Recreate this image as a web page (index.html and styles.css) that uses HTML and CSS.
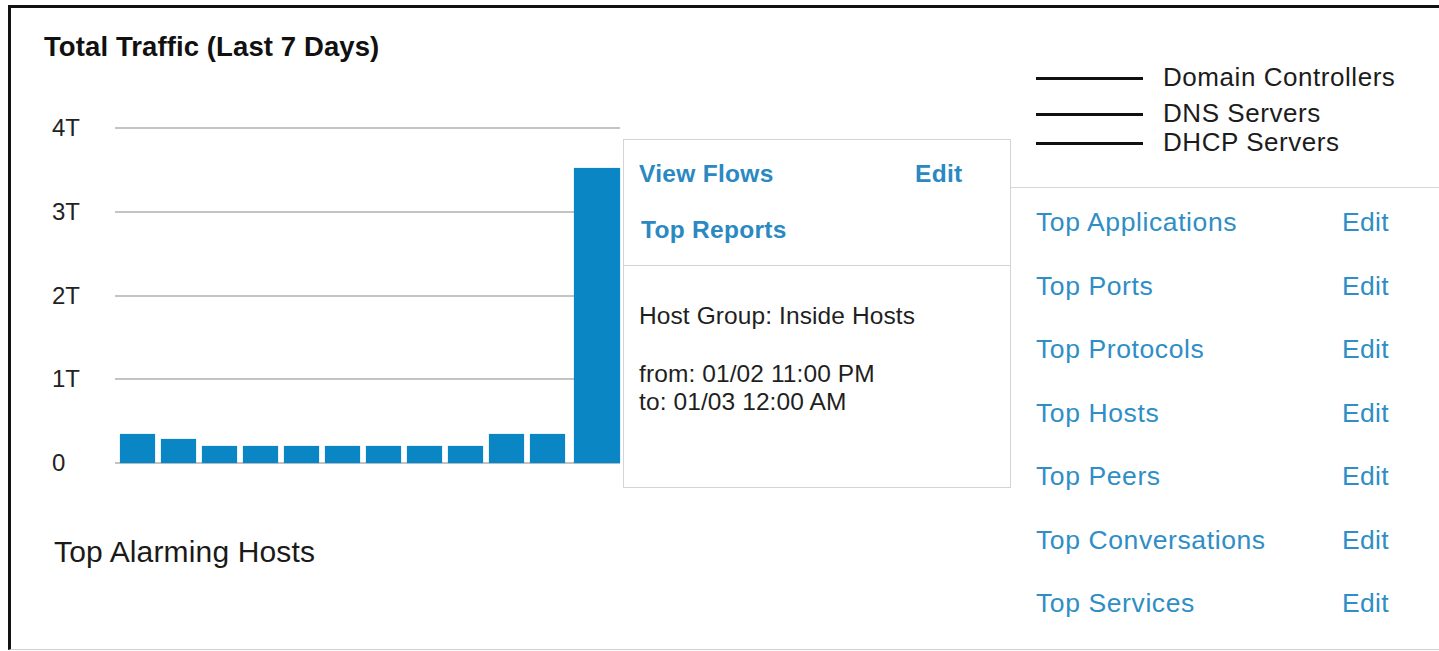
FILE: index.html
```html
<!DOCTYPE html>
<html lang="en">
<head>
<meta charset="utf-8">
<title>Total Traffic</title>
<link rel="stylesheet" href="styles.css">
</head>
<body>
<div class="frame">
  <section class="traffic">
    <h2 class="title">Total Traffic (Last 7 Days)</h2>

    <div class="chart">
      <div class="axis">
        <span>4T</span>
        <span>3T</span>
        <span>2T</span>
        <span>1T</span>
        <span>0</span>
      </div>
      <div class="plot">
        <div class="grid-lines">
          <div class="gl"></div>
          <div class="gl"></div>
          <div class="gl"></div>
          <div class="gl"></div>
          <div class="gl"></div>
        </div>
        <div class="bars">
          <div class="bar" style="height:29px"></div>
          <div class="bar" style="height:24px"></div>
          <div class="bar" style="height:17px"></div>
          <div class="bar" style="height:17px"></div>
          <div class="bar" style="height:17px"></div>
          <div class="bar" style="height:17px"></div>
          <div class="bar" style="height:17px"></div>
          <div class="bar" style="height:17px"></div>
          <div class="bar" style="height:17px"></div>
          <div class="bar" style="height:29px"></div>
          <div class="bar" style="height:29px"></div>
          <div class="bar bar-peak" style="height:295px"></div>
        </div>
      </div>
    </div>

    <h3 class="alarming">Top Alarming Hosts</h3>

    <div class="popover">
      <div class="pop-actions">
        <a class="pop-link">View Flows</a>
        <a class="pop-link">Edit</a>
        <a class="pop-link pop-reports">Top Reports</a>
      </div>
      <div class="pop-body">
        <p class="pop-group">Host Group: Inside Hosts</p>
        <p>from: 01/02 11:00 PM</p>
        <p>to: 01/03 12:00 AM</p>
      </div>
    </div>
  </section>

  <aside class="side">
    <ul class="legend">
      <li><span class="swatch"></span>Domain Controllers</li>
      <li class="legend-dns"><span class="swatch"></span>DNS Servers</li>
      <li class="legend-dhcp"><span class="swatch"></span>DHCP Servers</li>
    </ul>
    <ul class="reports">
      <li><a class="rep-name">Top Applications</a><a class="rep-edit">Edit</a></li>
      <li><a class="rep-name">Top Ports</a><a class="rep-edit">Edit</a></li>
      <li><a class="rep-name">Top Protocols</a><a class="rep-edit">Edit</a></li>
      <li><a class="rep-name">Top Hosts</a><a class="rep-edit">Edit</a></li>
      <li><a class="rep-name">Top Peers</a><a class="rep-edit">Edit</a></li>
      <li><a class="rep-name">Top Conversations</a><a class="rep-edit">Edit</a></li>
      <li><a class="rep-name">Top Services</a><a class="rep-edit">Edit</a></li>
    </ul>
  </aside>
</div>
</body>
</html>
```

FILE: styles.css
```css
* {
  box-sizing: border-box;
}

html,
body {
  margin: 0;
  padding: 0;
  background: #ffffff;
  overflow: hidden;
}

body {
  font-family: "Liberation Sans", Arial, Helvetica, sans-serif;
  color: #1c1c1c;
}

ul {
  list-style: none;
  margin: 0;
  padding: 0;
}

p,
h2,
h3 {
  margin: 0;
}

a {
  color: #2b8cc4;
  text-decoration: none;
  cursor: pointer;
}

/* outer panel */
.frame {
  display: flex;
  margin: 5px 0 0 8px;
  height: 645px;
  border-top: 3px solid #121212;
  border-left: 3px solid #121212;
  border-bottom: 1px solid #cfcfcf;
}

/* left: traffic chart */
.traffic {
  position: relative;
  width: 1000px;
  flex: none;
  padding: 22.5px 0 0 33px;
}

.title {
  font-size: 27.5px;
  line-height: 32px;
  font-weight: 700;
  letter-spacing: 0.1px;
  color: #111111;
}

.chart {
  display: grid;
  grid-template-columns: 63px 505px;
  height: 359px;
  margin: 53.5px 0 0 8px;
}

.axis {
  display: flex;
  flex-direction: column;
  justify-content: space-between;
  font-size: 24px;
  line-height: 24px;
  color: #222222;
}

.plot {
  display: grid;
}

.grid-lines,
.bars {
  grid-area: 1 / 1;
}

.grid-lines {
  display: flex;
  flex-direction: column;
  justify-content: space-between;
}

.gl {
  height: 2px;
  margin: 11px 0;
  background: #c4c4c4;
}

.bars {
  display: flex;
  align-items: flex-end;
  padding: 0 0 12px 5px;
}

.bar {
  width: 35px;
  margin-right: 6px;
  background: #0b86c5;
  box-shadow: 0 0 1px rgba(11, 134, 197, 0.6);
}

.bar-peak {
  width: 46px;
  margin: 0 0 0 3px;
}

.alarming {
  margin: 59.5px 0 0 10px;
  font-size: 30px;
  line-height: 34px;
  font-weight: 400;
  letter-spacing: 0.15px;
  color: #1a1a1a;
}

/* hover card over the peak bar */
.popover {
  position: absolute;
  left: 612px;
  top: 131px;
  width: 388px;
  height: 349px;
  background: #ffffff;
  border: 1px solid #d4d4d4;
}

.pop-actions {
  display: grid;
  grid-template-columns: 276px auto;
  row-gap: 28px;
  padding: 20px 0 21px 15px;
  border-bottom: 1px solid #d4d4d4;
}

.pop-link {
  font-size: 24.5px;
  line-height: 28px;
  font-weight: 700;
  letter-spacing: 0.3px;
  color: #2a89c2;
}

.pop-reports {
  grid-column: 1 / span 2;
  margin-left: 2px;
}

.pop-body {
  padding: 36px 0 0 15px;
  font-size: 24.5px;
  line-height: 28px;
  letter-spacing: 0.1px;
  color: #1f1f1f;
}

.pop-group {
  margin-bottom: 30px;
}

/* right: legend and report links */
.side {
  flex: 1;
  padding-top: 54px;
}

.legend {
  display: flex;
  flex-direction: column;
  padding-left: 25px;
  font-size: 26px;
  line-height: 30px;
  letter-spacing: 0.55px;
  color: #1c1c1c;
}

.legend li {
  display: flex;
  align-items: center;
  height: 30px;
}

.legend .legend-dns {
  margin-top: 6px;
}

.legend .legend-dhcp {
  margin-top: -1px;
}

.swatch {
  width: 107px;
  height: 3px;
  margin: 3px 20px 0 0;
  background: #111111;
}

.reports {
  margin-top: 30px;
  padding: 2.25px 0 0 25px;
  border-top: 1px solid #d6d6d6;
}

.reports li {
  display: flex;
  align-items: center;
  height: 63.5px;
  font-size: 26.5px;
  line-height: 30px;
  letter-spacing: 0.6px;
}

.rep-name {
  width: 306px;
  color: #2e8ec5;
}

.rep-edit {
  color: #2e8ec5;
  letter-spacing: 0.3px;
}
```
